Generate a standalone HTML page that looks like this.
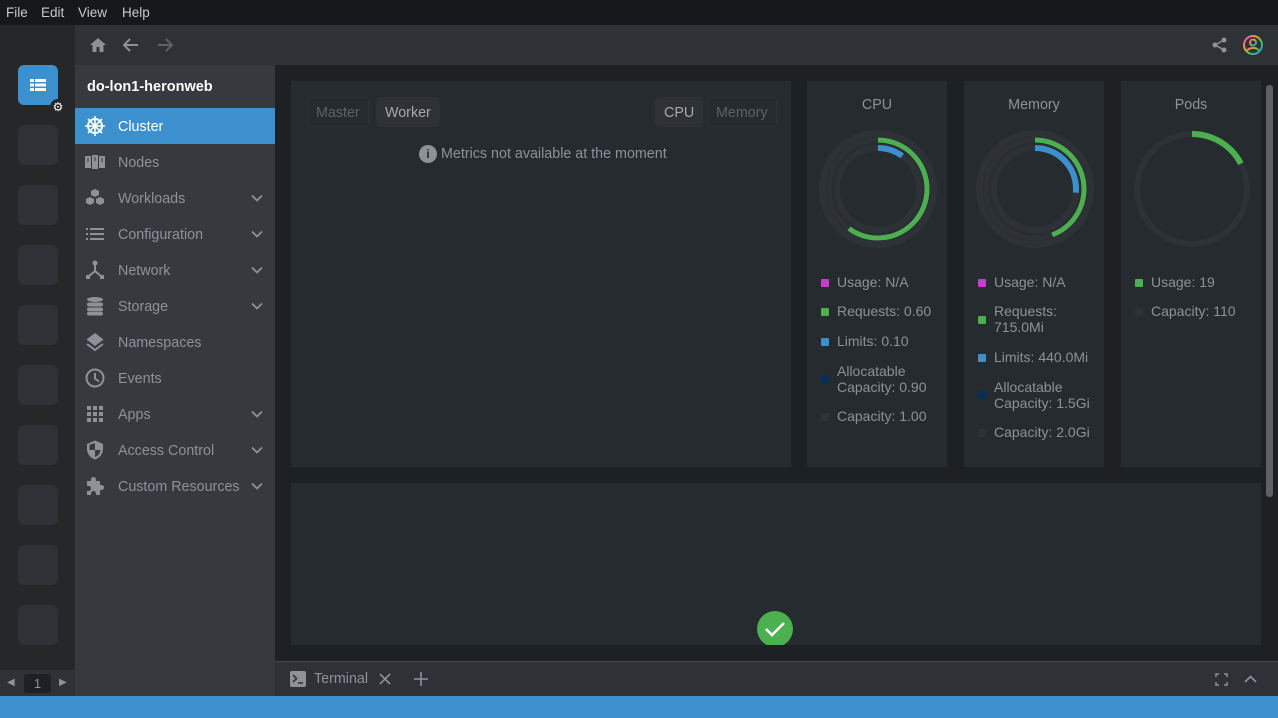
<!DOCTYPE html>
<html><head><meta charset="utf-8"><style>
*{box-sizing:border-box;margin:0;padding:0}
body{width:1278px;height:718px;overflow:hidden;background:#1e2124;font-family:"Liberation Sans",Roboto,sans-serif;font-size:14px;color:#8e9297;position:relative}
.abs{position:absolute}
.menu{left:0;top:0;width:1278px;height:25px;background:#16181b;color:#c8c9cb;font-size:13.5px}
.menu span{position:absolute;top:5px}
.hot{left:0;top:25px;width:75px;height:671px;background:#252729}
.hb{position:absolute;left:18px;width:40px;height:40px;border-radius:6px;background:#2e3136}
.nav{left:75px;top:25px;width:1203px;height:40px;background:#2e3136}
.side{left:75px;top:65px;width:200px;height:631px;background:#36393e}
.item{position:absolute;left:0;width:200px;height:36px;line-height:38px;padding-left:43px;color:#8e9297;font-size:14.3px}
.item svg.ic{position:absolute;left:9px;top:7px}
.item .chev{position:absolute;right:12px;top:14px}
.panel{background:#262b2f}
.btn{position:absolute;top:16px;height:30px;line-height:30px;padding:0 8px;border:1px solid #2e3237;border-radius:3px;font-size:14.3px}
.leg{position:absolute;left:14px;font-size:14px;color:#8e9297;line-height:16px;top:0}
.leg i{position:absolute;left:0;top:5px;width:8px;height:8px;border-radius:1px}
.leg span{display:block;padding-left:16px}
.t{position:absolute;width:100%;text-align:center;top:16px;font-size:14.3px;color:#8e9297}
</style></head><body>
<div class="abs menu"><span style="left:6px">File</span><span style="left:41px">Edit</span><span style="left:78px">View</span><span style="left:122px">Help</span></div>

<div class="abs hot">
 <div class="hb" style="top:40px;background:#3d90ce">
  <svg width="40" height="40" viewBox="0 0 40 40"><rect x="12" y="14" width="4" height="3" fill="#fff"/><rect x="17" y="14" width="11" height="3" fill="#fff"/><rect x="12" y="18.5" width="4" height="3" fill="#fff"/><rect x="17" y="18.5" width="11" height="3" fill="#fff"/><rect x="12" y="23" width="4" height="3" fill="#fff"/><rect x="17" y="23" width="11" height="3" fill="#fff"/></svg>
 </div>
 <div class="abs" style="left:50px;top:74px;width:16px;height:16px;border-radius:8px;background:#252729;color:#fff;font-size:12px;text-align:center;line-height:16px">⚙</div>
 <div class="hb" style="top:100px"></div><div class="hb" style="top:160px"></div><div class="hb" style="top:220px"></div><div class="hb" style="top:280px"></div><div class="hb" style="top:340px"></div><div class="hb" style="top:400px"></div><div class="hb" style="top:460px"></div><div class="hb" style="top:520px"></div><div class="hb" style="top:580px"></div>
 <div class="abs" style="left:0;top:645px;width:75px;height:26px;background:#2e3136"></div>
 <div class="abs" style="left:7px;top:652px;font-size:10px;color:#8e9297">◀</div>
 <div class="abs" style="left:24px;top:649px;width:27px;height:19px;background:#1e2124;border-radius:3px;color:#8e9297;text-align:center;font-size:13px;line-height:19px">1</div>
 <div class="abs" style="left:59px;top:652px;font-size:10px;color:#8e9297">▶</div>
</div>

<div class="abs nav">
 <svg class="abs" style="left:14px;top:12px" width="18" height="16" viewBox="0 0 18 16"><path d="M9 1L1 8h2.5v7h4v-5h3v5h4V8H17z" fill="#8e9297"/></svg>
 <svg class="abs" style="left:47px;top:12px" width="18" height="16" viewBox="0 0 18 16"><path d="M16 8H3M8 2L2 8l6 6" stroke="#8e9297" stroke-width="2" fill="none"/></svg>
 <svg class="abs" style="left:81px;top:12px" width="18" height="16" viewBox="0 0 18 16"><path d="M2 8h13M10 2l6 6-6 6" stroke="#5d6065" stroke-width="2" fill="none"/></svg>
 <svg class="abs" style="left:1136px;top:11px" width="18" height="18" viewBox="0 0 18 18"><circle cx="13" cy="4" r="2.5" fill="#8e9297"/><circle cx="4" cy="9" r="2.5" fill="#8e9297"/><circle cx="13" cy="14" r="2.5" fill="#8e9297"/><path d="M13 4L4 9l9 5" stroke="#8e9297" stroke-width="1.5" fill="none"/></svg>
 <svg class="abs" style="left:1167px;top:9px" width="22" height="22" viewBox="0 0 22 22"><defs><linearGradient id="g" x1="0" y1="0" x2="1" y2="1"><stop offset="0" stop-color="#e040e0"/><stop offset=".35" stop-color="#f0a030"/><stop offset=".65" stop-color="#40c060"/><stop offset="1" stop-color="#3090e0"/></linearGradient></defs><circle cx="11" cy="11" r="9" stroke="url(#g)" stroke-width="2" fill="none"/><circle cx="11" cy="8.5" r="3" stroke="url(#g)" stroke-width="2" fill="none"/><path d="M5 16.5c3-3.5 9-3.5 12 0" stroke="url(#g)" stroke-width="2" fill="none"/></svg>
</div>

<div class="abs side">
 <div class="abs" style="left:12px;top:14px;color:#fff;font-weight:bold;font-size:14.5px">do-lon1-heronweb</div>
 <div class="item" style="top:43px;background:#3d90ce;color:#fff">
  <svg class="ic" width="22" height="22" viewBox="0 0 22 22"><circle cx="11" cy="11" r="7" stroke="#fff" stroke-width="2" fill="none"/><circle cx="11" cy="11" r="2" fill="#fff"/><path d="M11 1v20M1 11h20M4 4l14 14M18 4L4 18" stroke="#fff" stroke-width="1.6"/></svg>Cluster</div>
 <div class="item" style="top:79px"><svg class="ic" width="22" height="22" viewBox="0 0 22 22"><rect x="1" y="5" width="6" height="12" fill="#8e9297"/><rect x="8" y="4" width="6" height="14" fill="#8e9297"/><rect x="15" y="5" width="6" height="12" fill="#8e9297"/><path d="M3 8h2M10 7h2M17 8h2M3 10h2M10 9h2M17 10h2" stroke="#36393e"/></svg>Nodes</div>
 <div class="item" style="top:115px"><svg class="ic" width="22" height="22" viewBox="0 0 22 22"><path d="M11 2l4 2v4l-4 2-4-2V4zM6 10l4 2v4l-4 2-4-2v-4zM16 10l4 2v4l-4 2-4-2v-4z" fill="#8e9297"/></svg>Workloads<svg class="chev" width="12" height="8" viewBox="0 0 12 8"><path d="M1 1.5l5 5 5-5" stroke="#8e9297" stroke-width="1.8" fill="none"/></svg></div>
 <div class="item" style="top:151px"><svg class="ic" width="22" height="22" viewBox="0 0 22 22"><path d="M2 6h2M6 6h14M2 11h2M6 11h14M2 16h2M6 16h14" stroke="#8e9297" stroke-width="2"/></svg>Configuration<svg class="chev" width="12" height="8" viewBox="0 0 12 8"><path d="M1 1.5l5 5 5-5" stroke="#8e9297" stroke-width="1.8" fill="none"/></svg></div>
 <div class="item" style="top:187px"><svg class="ic" width="22" height="22" viewBox="0 0 22 22"><circle cx="11" cy="4" r="2.5" fill="#8e9297"/><rect x="2" y="16" width="4" height="4" fill="#8e9297"/><rect x="16" y="16" width="4" height="4" fill="#8e9297"/><path d="M11 4v8L4 18M11 12l7 6" stroke="#8e9297" stroke-width="2" fill="none"/></svg>Network<svg class="chev" width="12" height="8" viewBox="0 0 12 8"><path d="M1 1.5l5 5 5-5" stroke="#8e9297" stroke-width="1.8" fill="none"/></svg></div>
 <div class="item" style="top:223px"><svg class="ic" width="22" height="22" viewBox="0 0 22 22"><ellipse cx="11" cy="4.5" rx="8" ry="2.5" fill="#8e9297"/><rect x="3" y="7.5" width="16" height="4" rx="2" fill="#8e9297"/><rect x="3" y="12.5" width="16" height="4" rx="2" fill="#8e9297"/><rect x="3" y="17" width="16" height="3.5" rx="1.7" fill="#8e9297"/></svg>Storage<svg class="chev" width="12" height="8" viewBox="0 0 12 8"><path d="M1 1.5l5 5 5-5" stroke="#8e9297" stroke-width="1.8" fill="none"/></svg></div>
 <div class="item" style="top:259px"><svg class="ic" width="22" height="22" viewBox="0 0 22 22"><path d="M11 2l8.5 6.5L11 15 2.5 8.5z" fill="#8e9297"/><path d="M3 13l8 6 8-6" stroke="#8e9297" stroke-width="2" fill="none"/></svg>Namespaces</div>
 <div class="item" style="top:295px"><svg class="ic" width="22" height="22" viewBox="0 0 22 22"><circle cx="11" cy="11" r="8.5" stroke="#8e9297" stroke-width="2" fill="none"/><path d="M11 6v5.5l4 3" stroke="#8e9297" stroke-width="2" fill="none"/></svg>Events</div>
 <div class="item" style="top:331px"><svg class="ic" width="22" height="22" viewBox="0 0 22 22"><g fill="#8e9297"><rect x="3" y="3" width="4" height="4"/><rect x="9" y="3" width="4" height="4"/><rect x="15" y="3" width="4" height="4"/><rect x="3" y="9" width="4" height="4"/><rect x="9" y="9" width="4" height="4"/><rect x="15" y="9" width="4" height="4"/><rect x="3" y="15" width="4" height="4"/><rect x="9" y="15" width="4" height="4"/><rect x="15" y="15" width="4" height="4"/></g></svg>Apps<svg class="chev" width="12" height="8" viewBox="0 0 12 8"><path d="M1 1.5l5 5 5-5" stroke="#8e9297" stroke-width="1.8" fill="none"/></svg></div>
 <div class="item" style="top:367px"><svg class="ic" width="22" height="22" viewBox="0 0 22 22"><path d="M11 1.5l8 3.5v5c0 5-3.5 9-8 10.5C6.5 19 3 15 3 10V5z" fill="#8e9297"/><path d="M11 4v7H5.5V6zM11 11h5.5c-.5 3.5-2.5 6-5.5 7z" fill="#36393e"/></svg>Access Control<svg class="chev" width="12" height="8" viewBox="0 0 12 8"><path d="M1 1.5l5 5 5-5" stroke="#8e9297" stroke-width="1.8" fill="none"/></svg></div>
 <div class="item" style="top:403px"><svg class="ic" width="22" height="22" viewBox="0 0 22 22"><path d="M3 6h4V4.5a2.5 2.5 0 015 0V6h4v4h1.5a2.5 2.5 0 010 5H16v5H12v-1.5a2.5 2.5 0 00-5 0V20H3v-4h1.5a2.5 2.5 0 000-5H3z" fill="#8e9297"/></svg>Custom Resources<svg class="chev" width="12" height="8" viewBox="0 0 12 8"><path d="M1 1.5l5 5 5-5" stroke="#8e9297" stroke-width="1.8" fill="none"/></svg></div>
</div>

<div class="abs panel" style="left:291px;top:81px;width:500px;height:386px">
 <div class="btn" style="left:16px;color:#5d6166">Master</div>
 <div class="btn" style="left:85px;background:#2e3237;color:#a6a9ad">Worker</div>
 <div class="btn" style="left:364px;background:#2e3237;color:#a6a9ad">CPU</div>
 <div class="btn" style="left:416px;color:#5d6166">Memory</div>
 <div class="abs" style="left:128px;top:64px;width:18px;height:18px;border-radius:9px;background:#8e9297;color:#262b2f;font-weight:bold;font-size:12px;text-align:center;line-height:18px">i</div>
 <div class="abs" style="left:150px;top:65px;font-size:14.3px;color:#8e9297">Metrics not available at the moment</div>
</div>

<div class="abs panel" style="left:807px;top:81px;width:140px;height:386px">
 <div class="t">CPU</div>
 <svg class="abs" style="left:11px;top:48px" width="120" height="120" viewBox="0 0 120 120">
  <g transform="rotate(-90 60 60)" fill="none">
   <circle cx="60" cy="60" r="55.5" stroke="#2e3237" stroke-width="7"/>
   <circle cx="60" cy="60" r="49" stroke="#2e3237" stroke-width="5"/>
   <circle cx="60" cy="60" r="49" stroke="#4caf50" stroke-width="5" stroke-dasharray="184.7 400"/>
   <circle cx="60" cy="60" r="45" stroke="#2a2e33" stroke-width="2"/>
   <circle cx="60" cy="60" r="41" stroke="#2e3237" stroke-width="6"/>
   <circle cx="60" cy="60" r="41" stroke="#3d90ce" stroke-width="6" stroke-dasharray="25.8 400"/>
  </g>
 </svg>
 <div class="leg" style="top:193px"><i style="background:#c93dce"></i><span>Usage: N/A</span></div>
 <div class="leg" style="top:222px"><i style="background:#4caf50"></i><span>Requests: 0.60</span></div>
 <div class="leg" style="top:252px"><i style="background:#3d90ce"></i><span>Limits: 0.10</span></div>
 <div class="leg" style="top:282px"><i style="background:#072e57;top:12px"></i><span>Allocatable<br>Capacity: 0.90</span></div>
 <div class="leg" style="top:327px"><i style="background:#2e3237"></i><span>Capacity: 1.00</span></div>
</div>

<div class="abs panel" style="left:964px;top:81px;width:140px;height:386px">
 <div class="t">Memory</div>
 <svg class="abs" style="left:11px;top:48px" width="120" height="120" viewBox="0 0 120 120">
  <g transform="rotate(-90 60 60)" fill="none">
   <circle cx="60" cy="60" r="55.5" stroke="#2e3237" stroke-width="7"/>
   <circle cx="60" cy="60" r="49" stroke="#2e3237" stroke-width="5"/>
   <circle cx="60" cy="60" r="49" stroke="#4caf50" stroke-width="5" stroke-dasharray="136 400"/>
   <circle cx="60" cy="60" r="45" stroke="#2a2e33" stroke-width="2"/>
   <circle cx="60" cy="60" r="41" stroke="#2e3237" stroke-width="6"/>
   <circle cx="60" cy="60" r="41" stroke="#3d90ce" stroke-width="6" stroke-dasharray="68 400"/>
  </g>
 </svg>
 <div class="leg" style="top:193px"><i style="background:#c93dce"></i><span>Usage: N/A</span></div>
 <div class="leg" style="top:222px"><i style="background:#4caf50;top:13px"></i><span>Requests:<br>715.0Mi</span></div>
 <div class="leg" style="top:268px"><i style="background:#3d90ce"></i><span>Limits: 440.0Mi</span></div>
 <div class="leg" style="top:298px"><i style="background:#072e57;top:12px"></i><span>Allocatable<br>Capacity: 1.5Gi</span></div>
 <div class="leg" style="top:343px"><i style="background:#2e3237"></i><span>Capacity: 2.0Gi</span></div>
</div>

<div class="abs panel" style="left:1121px;top:81px;width:140px;height:386px">
 <div class="t">Pods</div>
 <svg class="abs" style="left:11px;top:48px" width="120" height="120" viewBox="0 0 120 120">
  <g transform="rotate(-90 60 60)" fill="none">
   <circle cx="60" cy="60" r="55" stroke="#2e3237" stroke-width="6"/>
   <circle cx="60" cy="60" r="55" stroke="#4caf50" stroke-width="6" stroke-dasharray="60 400"/>
  </g>
 </svg>
 <div class="leg" style="top:193px"><i style="background:#4caf50"></i><span>Usage: 19</span></div>
 <div class="leg" style="top:222px"><i style="background:#2e3237"></i><span>Capacity: 110</span></div>
</div>

<div class="abs" style="left:1266px;top:85px;width:7px;height:412px;border-radius:3px;background:#5d6065"></div>

<div class="abs panel" style="left:291px;top:483px;width:970px;height:162px;overflow:hidden">
 <div class="abs" style="left:466px;top:128px;width:36px;height:36px;border-radius:18px;background:#4caf50">
  <svg width="36" height="36" viewBox="0 0 36 36"><path d="M9 18l6 6 12-12" stroke="#fff" stroke-width="2.6" fill="none"/></svg>
 </div>
</div>

<div class="abs" style="left:275px;top:661px;width:1003px;height:35px;background:#2e3136;border-top:1px solid #46494e">
 <svg class="abs" style="left:15px;top:9px" width="16" height="16" viewBox="0 0 16 16"><rect width="16" height="16" rx="2" fill="#8e9297"/><path d="M3 4l3.5 3.5L3 11M8 12h5" stroke="#2e3136" stroke-width="1.6" fill="none"/></svg>
 <div class="abs" style="left:39px;top:9px;font-size:14.3px;color:#8e9297">Terminal</div>
 <svg class="abs" style="left:104px;top:11px" width="12" height="12" viewBox="0 0 12 12"><path d="M1 1l10 10M11 1L1 11" stroke="#8e9297" stroke-width="1.6"/></svg>
 <svg class="abs" style="left:139px;top:10px" width="14" height="14" viewBox="0 0 14 14"><path d="M7 0v14M0 7h14" stroke="#8e9297" stroke-width="1.6"/></svg>
 <svg class="abs" style="left:940px;top:11px" width="13" height="13" viewBox="0 0 13 13"><path d="M1 4V1h3M9 1h3v3M12 9v3H9M4 12H1V9" stroke="#8e9297" stroke-width="1.5" fill="none"/></svg>
 <svg class="abs" style="left:969px;top:13px" width="13" height="8" viewBox="0 0 13 8"><path d="M1 7l5.5-5.5L12 7" stroke="#8e9297" stroke-width="1.6" fill="none"/></svg>
</div>
<div class="abs" style="left:0;top:696px;width:1278px;height:22px;background:#3d90ce"></div>
</body></html>
